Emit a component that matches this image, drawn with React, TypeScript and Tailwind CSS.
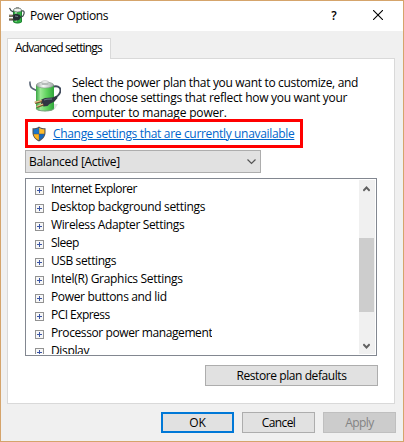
import { clsx } from 'clsx';

const settings = [
  { name: 'Internet Explorer', tracking: 'tracking-[-0.55px]' },
  { name: 'Desktop background settings', tracking: 'tracking-[-0.33px]' },
  { name: 'Wireless Adapter Settings', tracking: 'tracking-[-0.37px]' },
  { name: 'Sleep', tracking: 'tracking-[-0.5px]' },
  { name: 'USB settings', tracking: 'tracking-[-0.4px]' },
  { name: 'Intel(R) Graphics Settings', tracking: 'tracking-[-0.3px]' },
  { name: 'Power buttons and lid', tracking: 'tracking-[-0.35px]' },
  { name: 'PCI Express', tracking: 'tracking-[-0.55px]' },
  { name: 'Processor power management', tracking: 'tracking-[-0.4px]' },
  { name: 'Display', tracking: 'tracking-[-0.35px]' },
];

function BatteryIcon({ className }: { className?: string }) {
  return (
    <svg className={className} viewBox="0 0 32 32" fill="none">
      <defs>
        <linearGradient id="cell" x1="0" x2="1">
          <stop offset="0" stopColor="#3aa544" />
          <stop offset=".25" stopColor="#9be894" />
          <stop offset=".6" stopColor="#5fd35d" />
          <stop offset="1" stopColor="#2fa53b" />
        </linearGradient>
        <linearGradient id="metal" x1="0" x2="1">
          <stop offset="0" stopColor="#9aa2a0" />
          <stop offset=".4" stopColor="#f7faf8" />
          <stop offset="1" stopColor="#a0a8a6" />
        </linearGradient>
      </defs>
      <path d="M23 24h6l-3 5-4 1z" fill="#dfe2e1" />
      <path d="M1 1.500q-.5 5 2.500 7l4 2" stroke="#566273" strokeWidth="1.500" />
      <path d="M7 5v23.500c0 3.500 18 3.500 18 0V5z" fill="url(#cell)" />
      <path d="M7.300 28.500c0 3.300 17.400 3.300 17.400 0" stroke="#7d9e84" strokeWidth="1" />
      <ellipse cx="16" cy="5" rx="8.700" ry="3" fill="url(#metal)" stroke="#85918a" strokeWidth=".6" />
      <path d="M12.500 2v2.200c0 1.200 7 1.200 7 0V2z" fill="#b5bbb9" />
      <ellipse cx="16" cy="2" rx="3.500" ry="1.300" fill="#f4f5f4" stroke="#a0a6a4" strokeWidth=".5" />
      <path d="M25 6.500c5-1 7.500 2 6 6-1 3-3.500 4.500-6 6" stroke="#414b5c" strokeWidth="1.900" />
      <path d="m12.500 19.500 3.500-1.500 7-.5 4.500-1.500 1 2-3 3.500-5 2.500-2 2-4 .5-2.500-3z" fill="#303642" />
      <path d="m15 20 3-.8 5-.2" stroke="#798493" strokeWidth=".9" />
      <path d="m13 21-7 1.800M14.500 24.500 8 27" stroke="#76552b" strokeWidth="2.400" />
      <path d="m12.500 20.500-7 1.800M14 24l-6.500 2.500" stroke="#e8cb94" strokeWidth="1.200" />
    </svg>
  );
}

function TitleIcon() {
  return (
    <svg className="h-[17px] w-[17px]" viewBox="0 0 17 17" fill="none">
      <path d="M5 3v11.500c0 2.300 9 2.300 9 0V3z" fill="#2fae42" />
      <path d="M5.500 4v10.500c0 2 8 2 8 0V4" stroke="#1f7a31" strokeWidth=".9" />
      <path d="M8 5v2M8 13v1.500" stroke="#a7efa6" strokeWidth="2" />
      <ellipse cx="9.500" cy="3" rx="4" ry="2" fill="#eef3ef" stroke="#66706a" strokeWidth=".8" />
      <path d="M8 .8h3" stroke="#828985" strokeWidth="1.300" />
      <path d="M1.500 1 3 3.500l2.500 1.500M13.500 4c3.500-1 3 3 1.500 5l-2 1" stroke="#3e474d" strokeWidth="1.200" />
      <path d="m5 8 3-1.500L12 8l1 2.500-2 2.500-3.500.8L5 13z" fill="#252b31" />
      <path d="m7 9 3 .5" stroke="#78828c" />
      <path d="M1 8.800h5M1 12.500h5" stroke="#3a3a38" strokeWidth="1.900" />
      <path d="M1 8.400h3.500M1 12.100h3.500" stroke="#c7a773" strokeWidth=".7" />
    </svg>
  );
}

function ShieldIcon() {
  return (
    <svg className="h-[16px] w-[14px]" viewBox="0 0 14 16">
      <path d="M7 .4C5 2 3 2.300.5 2.300v4.200c0 4 2.500 7 6.500 9 4-2 6.500-5 6.500-9V2.300C11 2.300 9 2 7 .4z" fill="#515456" />
      <path d="M6.800 1.800v6H1.600L1.500 3.300c2 0 3.700-.3 5.300-1.500z" fill="#1976cb" />
      <path d="M7.200 1.800v6h5.200l.1-4.500c-2 0-3.700-.3-5.300-1.500z" fill="#ffbd2e" />
      <path d="M1.600 8.200h5.200v6c-3-1.500-4.700-3.500-5.200-6z" fill="#ffb51e" />
      <path d="M7.200 8.200h5.200c-.5 2.500-2.200 4.500-5.200 6z" fill="#1769c0" />
    </svg>
  );
}

function ExpandIcon() {
  return (
    <svg className="mt-[6px] size-[9px] shrink-0" viewBox="0 0 9 9" shapeRendering="crispEdges">
      <path d="M.5.5h8v8h-8z" fill="#f7f7f7" stroke="#929292" />
      <path d="M2 4.500h5M4.500 2v5" stroke="#3b55a4" />
    </svg>
  );
}

function Button({ label, className }: { label: string; className?: string }) {
  return (
    <button
      className={clsx(
        'flex h-[21px] items-center justify-center border text-[12px] leading-[18px] whitespace-nowrap',
        className,
      )}
    >
      {label}
    </button>
  );
}

export default function App() {
  return (
    <div className="flex h-[442px] w-[404px] flex-col overflow-hidden border border-[#d5a46b] bg-[#f0f0f0] font-['Open_Sans','Noto_Sans',sans-serif] text-[12px] text-black">
      <header className="flex h-[30px] shrink-0 items-start bg-white pl-[7px]">
        <div className="mt-[6px]">
          <TitleIcon />
        </div>
        <h1 className="mt-[5px] ml-[5px] w-[230px] leading-[20px] tracking-[-0.35px] whitespace-nowrap">Power Options</h1>
        <button className="mt-[5px] ml-[70px] h-[20px] w-[8px] font-semibold">?</button>
        <svg className="mt-[9px] ml-[35px] size-[10px]" viewBox="0 0 10 10">
          <path d="m0 0 10 10M10 0 0 10" stroke="#000" strokeWidth="1.100" />
        </svg>
      </header>

      <main className="flex flex-col pt-[7px] pl-[6px]">
        <div className="z-10 h-[21px] w-[104px] border border-b-0 border-[#d9d9d9] bg-white pl-[7px] leading-[17px] tracking-[-0.87px] whitespace-nowrap">
          Advanced settings
        </div>
        <section className="-mt-px flex h-[346px] w-[388px] flex-col border border-[#d9d9d9] bg-white pl-[17px]">
          <div className="flex h-[60px] pt-[16px] pl-[4px]">
            <BatteryIcon className="mt-[5px] size-8" />
            <div className="ml-[11px] leading-[15px] whitespace-nowrap">
              <p className="tracking-[-0.32px]">Select the power plan that you want to customize, and</p>
              <p className="tracking-[-0.29px]">then choose settings that reflect how you want your</p>
              <p className="tracking-[-0.18px]">computer to manage power.</p>
            </div>
          </div>

          <div className="z-10 flex h-[29px] w-[278px] shrink-0 items-center border-3 border-[#ff0000] bg-white pl-[4px]">
            <ShieldIcon />
            <a href="#" className="ml-[7px] leading-[18px] tracking-[-0.33px] whitespace-nowrap text-[#0066cc] underline underline-offset-[1px]">
              Change settings that are currently unavailable
            </a>
          </div>

          <button className="mt-[2px] flex h-[23px] w-[236px] shrink-0 items-center justify-between border border-[#adadad] bg-[#e1e1e1] pr-[4px] pl-[3px]">
            <span className="tracking-[-0.28px]">Balanced [Active]</span>
            <svg className="size-[9px]" viewBox="0 0 9 9" fill="none">
              <path d="m.5 2.500 4 4 4-4" stroke="#555" strokeWidth="1.200" />
            </svg>
          </button>

          <div className="mt-[5px] flex h-[178px] w-[352px] shrink-0 justify-between border border-[#828790] py-px pr-px">
            <ul className="h-[174px] overflow-hidden pl-[9px]">
              {settings.map((item) => (
                <li key={item.name} className="flex h-[18px]">
                  <ExpandIcon />
                  <span className={clsx('ml-[7px] leading-[18px] whitespace-nowrap', item.tracking)}>{item.name}</span>
                </li>
              ))}
            </ul>
            <div className="flex w-[16px] flex-col bg-[#f0f0f0]">
              <div className="flex h-[58px] pt-[6px] pl-[4px]">
                <svg className="h-[6px] w-[7px]" viewBox="0 0 7 6" fill="none">
                  <path d="M.3 4.800 3.500 1.500l3.200 3.300" stroke="#606060" strokeWidth="2" />
                </svg>
              </div>
              <div className="h-[74px] w-[15px] bg-[#cdcdcd]" />
              <div className="flex flex-1 items-end pb-[5px] pl-[4px]">
                <svg className="h-[6px] w-[7px]" viewBox="0 0 7 6" fill="none">
                  <path d="m.3 1.200 3.200 3.300 3.200-3.300" stroke="#606060" strokeWidth="2" />
                </svg>
              </div>
            </div>
          </div>

          <Button label="Restore plan defaults" className="mt-[9px] ml-[180px] w-[173px] border-[#adadad] bg-[#e1e1e1] tracking-[-0.42px]" />
        </section>
      </main>

      <footer className="mt-[8px] flex gap-[8px] pl-[160px]">
        <Button label="OK" className="w-[73px] border-2 border-[#0078d7] bg-[#e1e1e1]" />
        <Button label="Cancel" className="w-[73px] border-[#adadad] bg-[#e1e1e1] tracking-[-0.6px]" />
        <Button label="Apply" className="w-[73px] border-[#bfbfbf] bg-[#cccccc] tracking-[-0.6px] text-[#838383]" />
      </footer>
    </div>
  );
}
